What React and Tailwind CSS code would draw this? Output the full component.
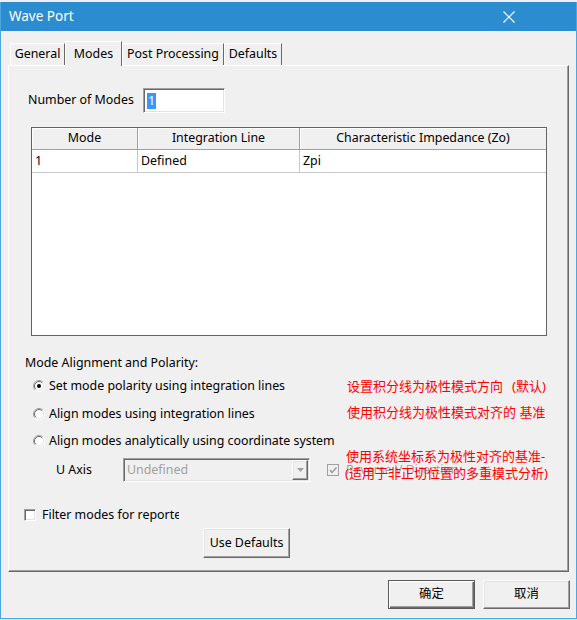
const raised =
  'border border-t-white border-l-white border-r-[#696969] border-b-[#696969] shadow-[inset_-1px_-1px_0_#a0a0a0,inset_1px_1px_0_#e3e3e3]'
const sunken =
  'border border-t-[#a0a0a0] border-l-[#a0a0a0] border-r-white border-b-white shadow-[inset_1px_1px_0_#696969,inset_-1px_-1px_0_#e3e3e3]'

function Radio({ checked }) {
  return (
    <svg width="12" height="12" viewBox="0 0 12 12" className="shrink-0">
      <circle cx="6" cy="6" r="5" fill="#fff" />
      <path d="M2.1 9.9 A5.5 5.5 0 0 1 9.9 2.1" fill="none" stroke="#a0a0a0" />
      <path d="M2.8 9.2 A4.5 4.5 0 0 1 9.2 2.8" fill="none" stroke="#696969" />
      <path d="M9.9 2.1 A5.5 5.5 0 0 1 2.1 9.9" fill="none" stroke="#fff" />
      <path d="M9.2 2.8 A4.5 4.5 0 0 1 2.8 9.2" fill="none" stroke="#e3e3e3" />
      {checked && <circle cx="6" cy="6" r="2" fill="#000" />}
    </svg>
  )
}

function Tab({ label, active, className = '' }) {
  return (
    <div
      className={`flex items-center justify-center border-l border-t border-r border-l-white border-t-white border-r-[#696969] bg-[#f0f0f0] ${
        active ? 'relative z-10 -mb-px h-[25px] self-end' : 'h-[22px]'
      } ${className}`}
    >
      {label}
    </div>
  )
}

export default function App() {
  return (
    <div className="h-[620px] w-[577px] bg-[#dde6ee] font-['Noto_Sans','Noto_Sans_CJK_SC',sans-serif] text-[12.4px] text-black">
      <div className="h-[2px] bg-[#eef2f6]" />
      <div className="flex h-[617px] flex-col border-x border-b border-[#4ca6e2] bg-[#f0f0f0]">
        {/* title bar */}
        <div className="flex h-[29px] items-center justify-between bg-[#2b8dd0] pl-[8px] pr-[61px] text-white">
          <span className="text-[13.5px]">Wave Port</span>
          <svg width="12" height="12" viewBox="0 0 12 12">
            <path d="M0.5 0.5 L11.5 11.5 M11.5 0.5 L0.5 11.5" stroke="#fff" strokeWidth="1.2" />
          </svg>
        </div>

        {/* tabs */}
        <div className="mt-[9px] flex h-[25px] items-end pl-[9px]">
          <Tab label="General" className="w-[55px]" />
          <Tab label="Modes" active className="w-[57px]" />
          <Tab label="Post Processing" className="w-[102px]" />
          <Tab label="Defaults" className="w-[58px]" />
        </div>

        {/* panel */}
        <div className="mx-[7px] flex h-[507px] flex-col border border-t-white border-l-white border-r-[#696969] border-b-[#696969] shadow-[inset_-1px_-1px_0_#a0a0a0]">
          <div className="ml-[19px] mt-[22px] flex items-center">
            <span className="w-[115px] overflow-hidden whitespace-nowrap">Number of Modes</span>
            <div className={`flex h-[25px] w-[82px] items-center bg-white pl-[3px] ${sunken}`}>
              <span className="bg-[#3399ff] px-[1px] leading-[16px] text-white">1</span>
            </div>
          </div>

          {/* table */}
          <div className="ml-[22px] mt-[14px] flex h-[209px] w-[516px] flex-col border border-[#646464] bg-white">
            <div className="flex h-[22px] bg-[#f0f0f0]">
              <div className="flex w-[106px] items-center justify-center border-r border-b border-[#a0a0a0] shadow-[inset_1px_1px_0_#fff]">Mode</div>
              <div className="flex w-[162px] items-center justify-center border-r border-b border-[#a0a0a0] shadow-[inset_1px_1px_0_#fff]">Integration Line</div>
              <div className="flex flex-1 items-center justify-center border-b border-[#a0a0a0] shadow-[inset_1px_1px_0_#fff]">Characteristic Impedance (Zo)</div>
            </div>
            <div className="flex h-[23px]">
              <div className="flex w-[106px] items-center border-r border-b border-[#c8c8c8] pl-[3px]">1</div>
              <div className="flex w-[162px] items-center border-r border-b border-[#c8c8c8] pl-[3px]">Defined</div>
              <div className="flex flex-1 items-center border-b border-[#c8c8c8] pl-[3px]">Zpi</div>
            </div>
          </div>

          <div className="ml-[16px] mt-[19px] leading-[16px]">Mode Alignment and Polarity:</div>

          <div className="ml-[24px] mt-[7px] grid grid-cols-[314px_1fr] items-center gap-y-[12px] leading-[16px]">
            <div className="flex items-center gap-[4px]">
              <Radio checked />
              <span>Set mode polarity using integration lines</span>
            </div>
            <span className="whitespace-nowrap text-[13px] text-[#ff0000]">
              设置积分线为极性模式方向<span className="ml-[9px]">(默认)</span>
            </span>
            <div className="flex items-center gap-[4px]">
              <Radio />
              <span>Align modes using integration lines</span>
            </div>
            <span className="-mt-[4px] whitespace-pre text-[13px] text-[#ff0000]">使用积分线为极性模式对齐的 基准</span>
            <div className="-mt-[1px] flex items-center gap-[4px]">
              <Radio />
              <span className="whitespace-nowrap">Align modes analytically using coordinate system</span>
            </div>
            <span />
          </div>

          <div className="relative ml-[47px] mt-[9px] flex h-[24px] items-center">
            <span className="w-[67px]">U Axis</span>
            <div className={`flex h-[24px] w-[187px] items-center justify-between bg-[#f0f0f0] pl-[3px] pr-[1px] text-[#a0a0a0] ${sunken}`}>
              <span>Undefined</span>
              <div className={`flex h-[20px] w-[16px] items-center justify-center ${raised}`}>
                <svg width="7" height="4" viewBox="0 0 7 4">
                  <path d="M0 0 H7 L3.5 4 Z" fill="#a0a0a0" />
                </svg>
              </div>
            </div>
            <div className="ml-[17px] flex items-center gap-[7px]">
              <svg width="12" height="12" viewBox="0 0 12 12">
                <rect x="0.5" y="0.5" width="11" height="11" fill="#f0f0f0" stroke="#a0a0a0" />
                <path d="M3 6 L5 8.5 L9.5 3.5" fill="none" stroke="#a0a0a0" strokeWidth="1.6" />
              </svg>
              <span className="text-[#a0a0a0] [text-shadow:1px_1px_0_#fff]">Reverse V Direction</span>
            </div>
            {/* red annotation lying over the checkbox label */}
            <div className="absolute left-[290px] top-[-10px] text-[13px] leading-[17px] text-[#ff0000]">
              <div>使用系统坐标系为极性对齐的基准-</div>
              <div className="-ml-[1px]">(适用于非正切位置的多重模式分析)</div>
            </div>
          </div>

          <div className="ml-[15px] mt-[25px] flex items-center gap-[6px] leading-[16px]">
            <div className={`h-[12px] w-[12px] bg-white ${sunken}`} />
            <span className="w-[137px] overflow-hidden whitespace-nowrap">Filter modes for reported</span>
          </div>

          <div className="ml-[194px] mt-[5px]">
            <button className={`h-[30px] w-[87px] bg-[#f0f0f0] ${raised}`}>Use Defaults</button>
          </div>
        </div>

        {/* bottom buttons */}
        <div className="mt-[8px] flex justify-end gap-[8px] pr-[6px]">
          <button className="h-[29px] w-[87px] border border-[#5a5a5a] bg-[#f0f0f0] shadow-[inset_1px_1px_0_#fff,inset_-1px_-1px_0_#696969,inset_-2px_-2px_0_#a0a0a0]">确定</button>
          <button className={`h-[29px] w-[87px] bg-[#f0f0f0] ${raised}`}>取消</button>
        </div>
      </div>
    </div>
  )
}
